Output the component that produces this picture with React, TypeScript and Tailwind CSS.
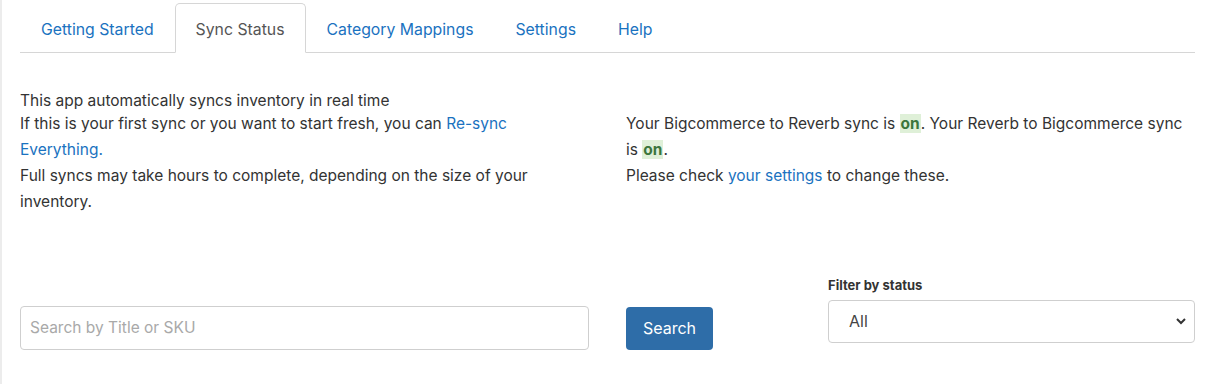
const tabs = ["Getting Started", "Sync Status", "Category Mappings", "Settings", "Help"];

const On = () => <span className="bg-[#dff0d8] text-[#3c763d] font-bold px-[1px]">on</span>;

const App = () => {
  return (
    <div className="h-[384px] w-full bg-white border-l-2 border-[#ececec] font-['Inter','Liberation_Sans',sans-serif] text-[15.5px] text-[#333]">
      <div className="pl-[18px] pr-[16px]">
        {/* tabs */}
        <ul className="flex pt-[3px] border-b border-[#d6d6d6] text-[15.8px]">
          {tabs.map((t) => (
            <li
              key={t}
              className={
                t === "Sync Status"
                  ? "-mb-px h-[50px] flex items-center pt-[4px] px-[20px] border border-[#d6d6d6] border-b-white rounded-t-[5px] bg-white text-[#555]"
                  : "-mb-px h-[50px] flex items-center pt-[4px] px-[20px] border border-transparent text-[#1a72c0]"
              }
            >
              {t}
            </li>
          ))}
        </ul>

        {/* status */}
        <div className="grid grid-cols-[569px_569px] gap-x-[37px] mt-[38px]">
          <div>
            <div className="leading-[20px]">This app automatically syncs inventory in real time</div>
            <p className="leading-[26px]">
              <span>If this is your first sync or you want to start fresh, you can </span>
              <a className="text-[#1a72c0]">Re-sync</a>
              <br />
              <a className="text-[#1a72c0]">Everything.</a>
            </p>
            <p className="leading-[26px]">
              <span>Full syncs may take hours to complete, depending on the size of your</span>
              <br />
              <span>inventory.</span>
            </p>
          </div>
          <div className="pt-[20px]">
            <p className="leading-[26px]">
              <span>Your Bigcommerce to Reverb sync is </span>
              <On />
              <span>. Your Reverb to Bigcommerce sync</span>
              <br />
              <span>is </span>
              <On />
              <span>.</span>
            </p>
            <p className="leading-[26px]">
              Please check <a className="text-[#1a72c0]">your settings</a> to change these.
            </p>
          </div>
        </div>

        {/* search row */}
        <div className="flex items-end mt-[61px]">
          <input
            className="w-[569px] h-[44px] border border-[#cfcfcf] rounded-[4px] px-[9px] text-[15.5px] placeholder:text-[#a9a9a9]"
            placeholder="Search by Title or SKU"
          />
          <button className="ml-[37px] h-[43px] px-[17px] rounded-[4px] bg-[#2e6da8] text-white text-[16px]">
            Search
          </button>
          <div className="ml-[115px] w-[367px] pb-[7px]">
            <label className="block text-[13px] font-bold text-[#333] mb-[4px]">Filter by status</label>
            <div className="relative">
              <select className="appearance-none w-full h-[43px] border border-[#cfcfcf] rounded-[4px] pl-[20px] text-[16px] text-[#444] bg-white">
                <option>All</option>
              </select>
              <svg
                className="absolute right-[8px] top-[16px]"
                width="12"
                height="10"
                viewBox="0 0 12 10"
                fill="none"
                stroke="#333"
                strokeWidth="2"
              >
                <path d="M2 3l4 4 4-4" />
              </svg>
            </div>
          </div>
        </div>
      </div>
    </div>
  );
};

export default App;
